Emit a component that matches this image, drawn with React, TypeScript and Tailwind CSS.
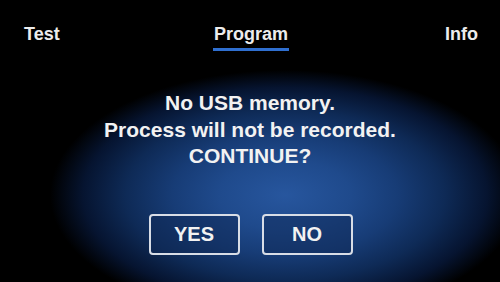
export default function App() {
  return (
    <div
      className="w-[500px] h-[282px] overflow-hidden flex flex-col bg-black text-white"
      style={{ fontFamily: '"Liberation Sans", Arial, sans-serif' }}
    >
      <div className="relative flex-1 flex flex-col bg-[radial-gradient(ellipse_235px_125px_at_285px_195px,#27569e_0%,#1f4a8c_28%,#173c76_48%,#0e2a56_68%,#061430_86%,#000000_100%)]">
        {/* Tabs */}
        <div className="grid grid-cols-3 items-start pl-[24px] pr-[22px] pt-[23px] text-[18px] leading-[22px] font-bold text-[#ececec]">
          <div className="justify-self-start">Test</div>
          <div className="justify-self-center pb-[3px] border-b-[3px] border-[#2f6fd0] px-[1px]">Program</div>
          <div className="justify-self-end">Info</div>
        </div>

        {/* Message */}
        <div className="mt-[39px] flex flex-col items-center text-[21px] font-bold leading-[26.5px] text-[#f2f2f2]">
          <div>No USB memory.</div>
          <div>Process will not be recorded.</div>
          <div>CONTINUE?</div>
        </div>

        {/* Buttons */}
        <div className="mt-[44px] flex justify-center gap-[22px] pl-[1px]">
          <button className="w-[91px] h-[41px] rounded-[4px] border-2 border-[#d8dde6] bg-[#0f2a58]/50 text-[20px] font-bold text-[#f2f2f2]">
            YES
          </button>
          <button className="w-[91px] h-[41px] rounded-[4px] border-2 border-[#d8dde6] bg-[#0f2a58]/50 text-[20px] font-bold text-[#f2f2f2]">
            NO
          </button>
        </div>
      </div>
    </div>
  );
}
